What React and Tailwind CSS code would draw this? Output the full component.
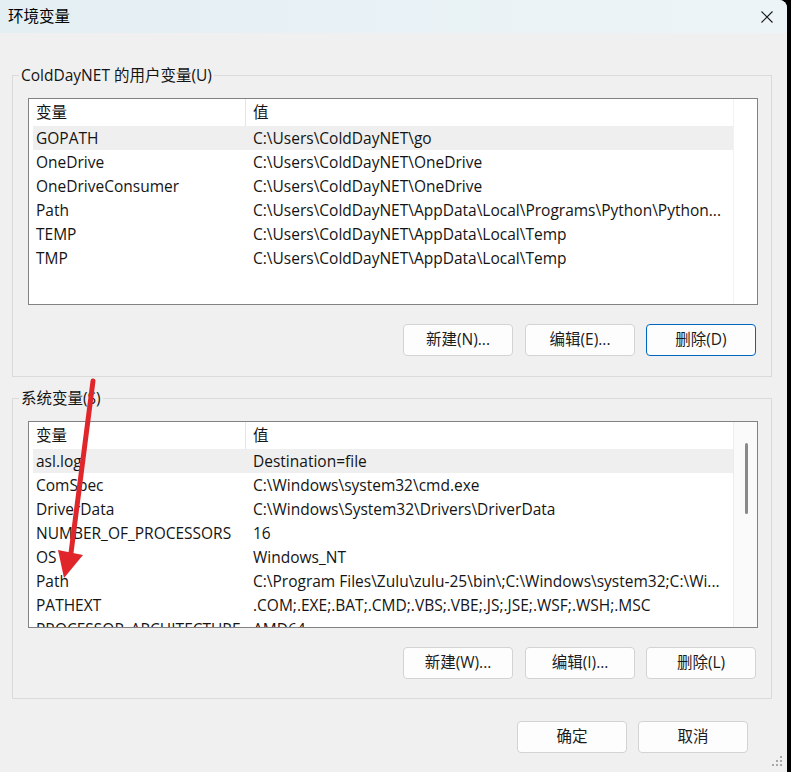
import React from 'react'

const font = { fontFamily: '"Open Sans", "Noto Sans CJK SC", sans-serif' }

const userVars = [
  ['GOPATH', 'C:\\Users\\ColdDayNET\\go'],
  ['OneDrive', 'C:\\Users\\ColdDayNET\\OneDrive'],
  ['OneDriveConsumer', 'C:\\Users\\ColdDayNET\\OneDrive'],
  ['Path', 'C:\\Users\\ColdDayNET\\AppData\\Local\\Programs\\Python\\Python...'],
  ['TEMP', 'C:\\Users\\ColdDayNET\\AppData\\Local\\Temp'],
  ['TMP', 'C:\\Users\\ColdDayNET\\AppData\\Local\\Temp'],
]

const sysVars = [
  ['asl.log', 'Destination=file'],
  ['ComSpec', 'C:\\Windows\\system32\\cmd.exe'],
  ['DriverData', 'C:\\Windows\\System32\\Drivers\\DriverData'],
  ['NUMBER_OF_PROCESSORS', '16'],
  ['OS', 'Windows_NT'],
  ['Path', 'C:\\Program Files\\Zulu\\zulu-25\\bin\\;C:\\Windows\\system32;C:\\Wi...'],
  ['PATHEXT', '.COM;.EXE;.BAT;.CMD;.VBS;.VBE;.JS;.JSE;.WSF;.WSH;.MSC'],
  ['PROCESSOR_ARCHITECTURE', 'AMD64'],
]

function ListView({ rows, scroll }) {
  return (
    <div className="flex w-[730px] h-[207px] border border-[#828282] bg-white overflow-hidden">
      <div className="w-[704px] pl-[4px] overflow-hidden">
        <div className="grid grid-cols-[213px_1fr] h-[27px] items-center text-[15.5px] text-[#141414]">
          <div className="pl-[3px] h-full flex items-center border-r border-[#e5e5e5]">变量</div>
          <div className="pl-[7px]">值</div>
        </div>
        {rows.map(([name, value], i) => (
          <div
            key={name}
            className={`grid grid-cols-[213px_1fr] h-6 items-center text-[15.5px] leading-[22px] text-[#141414] ${i === 0 ? 'bg-[#efefef]' : ''}`}
          >
            <div className="pl-[3px] whitespace-nowrap overflow-hidden">{name}</div>
            <div className="pl-[7px] whitespace-nowrap overflow-hidden">{value}</div>
          </div>
        ))}
      </div>
      {scroll ? (
        <div className="flex-1 bg-[#fafafa] border-l border-[#ececec] flex justify-center pt-[21px]">
          <div className="w-[3px] h-[71px] rounded-full bg-[#8a8a8a] ml-[1px]" />
        </div>
      ) : (
        <div className="flex-1 border-l border-[#f2f2f2]" />
      )}
    </div>
  )
}

function Btn({ children, primary }) {
  return (
    <button
      className={`w-[110px] h-8 rounded-[4px] bg-[#fdfdfd] text-[15.5px] text-[#1b1b1b] border ${primary ? 'border-[#0067c0]' : 'border-[#d3d3d3]'}`}
    >
      {children}
    </button>
  )
}

function Group({ label, rows, scroll, buttons, mt, pb }) {
  return (
    <fieldset className={`ml-[12px] w-[760px] border border-[#dadada] ${mt} ${pb}`}>
      <legend className="ml-[6px] px-[2px] text-[15.5px] leading-[20px] text-[#141414]">{label}</legend>
      <div className="pl-[15px] pt-[13px]">
        <ListView rows={rows} scroll={scroll} />
        <div className="flex justify-end gap-[11px] w-[730px] pr-[2px] mt-[19px]">
          <div className="mr-[1px]">
            <Btn>{buttons[0]}</Btn>
          </div>
          <Btn>{buttons[1]}</Btn>
          <Btn primary={buttons[3]}>{buttons[2]}</Btn>
        </div>
      </div>
    </fieldset>
  )
}

export default function App() {
  return (
    <div className="w-[791px] h-[772px] bg-black" style={font}>
      <div className="relative w-[787px] h-[772px] bg-[#f0f0f0] rounded-tr-[8px] overflow-hidden">
        <div className="h-[33px] flex items-center justify-between pl-[8px] pr-[14px] bg-gradient-to-r from-[#e4eff3] to-[#edf4f7]">
          <span className="text-[15.5px] text-black">环境变量</span>
          <svg width="12" height="12" viewBox="0 0 12 12" className="mt-[1px]">
            <path d="M0.5 0.5 L11.5 11.5 M11.5 0.5 L0.5 11.5" stroke="#1a1a1a" strokeWidth="1.1" />
          </svg>
        </div>

        <Group
          label="ColdDayNET 的用户变量(U)"
          rows={userVars}
          buttons={['新建(N)...', '编辑(E)...', '删除(D)', true]}
          mt="mt-[32px]"
          pb="pb-[20px]"
        />
        <Group
          label="系统变量(S)"
          rows={sysVars}
          scroll
          buttons={['新建(W)...', '编辑(I)...', '删除(L)', false]}
          mt="mt-[11px]"
          pb="pb-[19px]"
        />

        <div className="flex justify-end gap-[11px] pr-[39px] mt-[22px]">
          <Btn>确定</Btn>
          <Btn>取消</Btn>
        </div>

        {/* resize grip */}
        <svg width="14" height="14" viewBox="0 0 14 14" className="absolute right-[3px] bottom-[2px]">
          <rect x="10" y="0" width="2" height="2" fill="#a8a8a8" />
          <rect x="6" y="4" width="2" height="2" fill="#a8a8a8" />
          <rect x="10" y="4" width="2" height="2" fill="#a8a8a8" />
          <rect x="2" y="8" width="2" height="2" fill="#a8a8a8" />
          <rect x="6" y="8" width="2" height="2" fill="#a8a8a8" />
          <rect x="10" y="8" width="2" height="2" fill="#a8a8a8" />
        </svg>

        {/* red annotation arrow */}
        <svg width="787" height="772" className="absolute inset-0 pointer-events-none">
          <path d="M93 381 L71 553" stroke="#e1262b" strokeWidth="5" strokeLinecap="round" />
          <polygon points="58,550 83,555 64,578" fill="#e1262b" />
        </svg>
      </div>
    </div>
  )
}
